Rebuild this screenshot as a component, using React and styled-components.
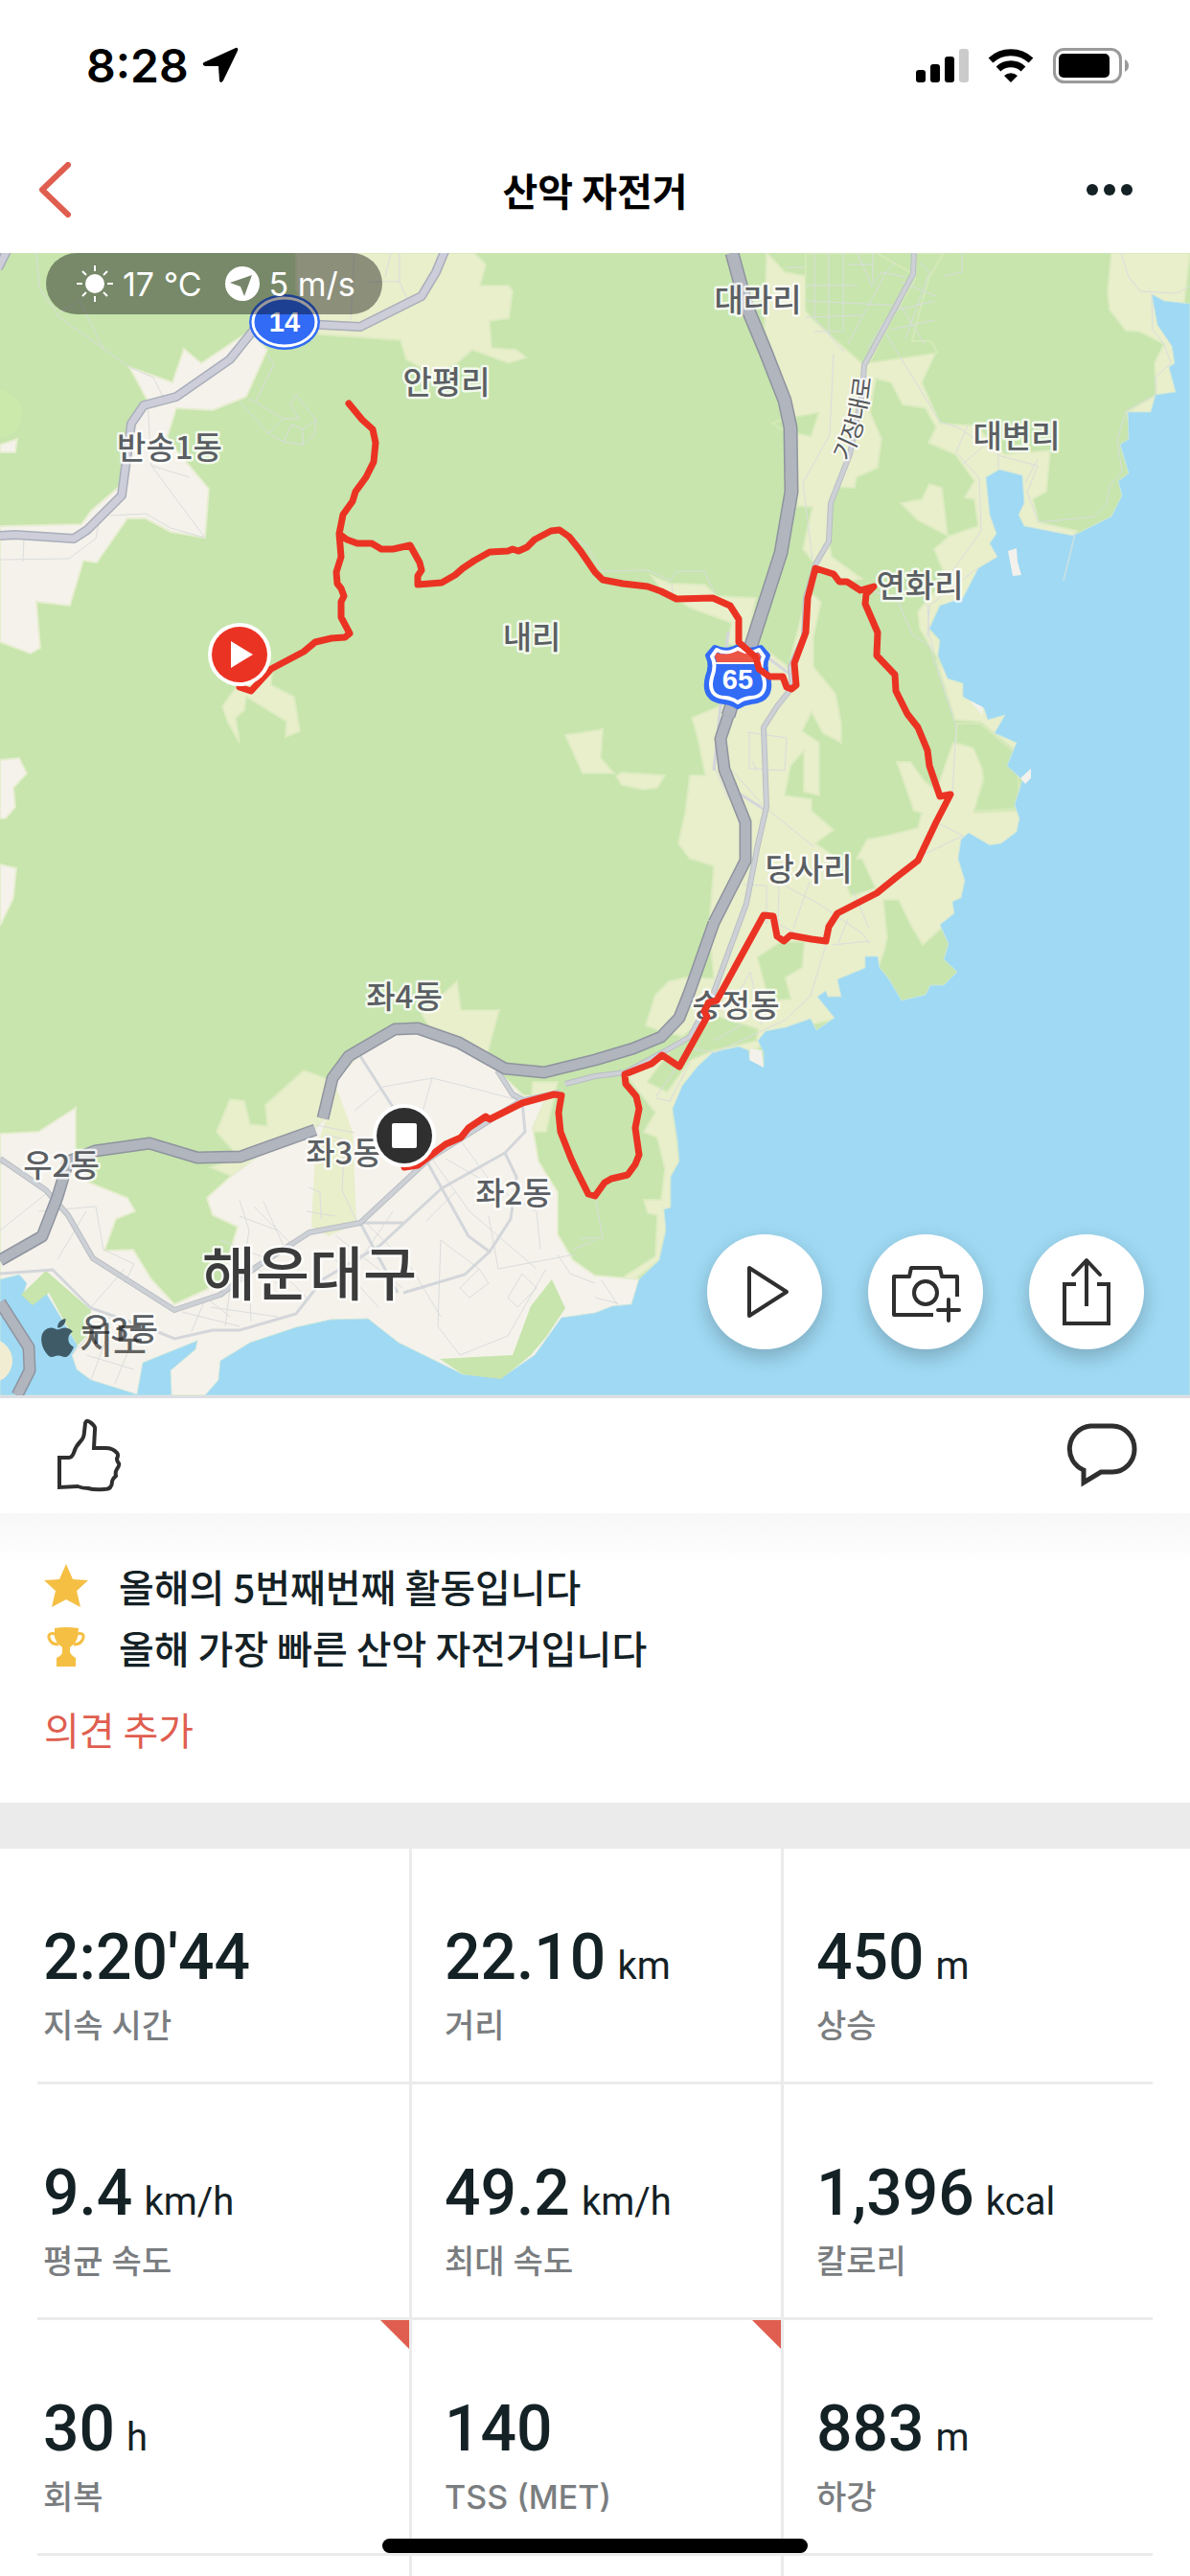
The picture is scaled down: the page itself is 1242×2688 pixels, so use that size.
import styled, { createGlobalStyle } from "styled-components";
import { FaApple } from "react-icons/fa";

const stats = [
  { value: "2:20'44", label: "지속 시간" },
  { value: "22.10", unit: "km", label: "거리" },
  { value: "450", unit: "m", label: "상승" },
  { value: "9.4", unit: "km/h", label: "평균 속도" },
  { value: "49.2", unit: "km/h", label: "최대 속도" },
  { value: "1,396", unit: "kcal", label: "칼로리" },
  { value: "30", unit: "h", label: "회복", flagged: true },
  { value: "140", label: "TSS (MET)", flagged: true },
  { value: "883", unit: "m", label: "하강" },
];

const places = [
  { name: "안평리", x: 466, y: 147 },
  { name: "반송1동", x: 177, y: 215 },
  { name: "내리", x: 555, y: 413 },
  { name: "대라리", x: 791, y: 61 },
  { name: "대변리", x: 1061, y: 203 },
  { name: "연화리", x: 960, y: 359 },
  { name: "당사리", x: 844, y: 655 },
  { name: "송정동", x: 768, y: 797 },
  { name: "좌4동", x: 422, y: 788 },
  { name: "좌3동", x: 359, y: 951 },
  { name: "좌2동", x: 536, y: 993 },
  { name: "우2동", x: 64, y: 964 },
  { name: "우3동", x: 125, y: 1135 },
];

const farmland = [
  "309,0 309,38 333,85 418,91 424,111 440,120 444,139 459,123 477,115 493,101 531,115 549,109 539,101 513,99 511,71 531,68 535,40 531,34 501,34 507,12 495,0",
  "248,451 232,473 238,490 250,511 246,485 255,477 257,463 299,489 298,505 313,499 307,463 283,451 284,436",
  "590,503 629,497 627,527 641,543 608,543",
  "643,546 649,542 694,545 686,558 671,560 649,555",
  "800,0 810,10 819,20 841,24 841,60 851,71 882,99 902,115 977,103 962,135 981,178 1017,180 1049,210 1096,206 1092,249 1078,257 1084,281 1124,290 1120,297 1069,287 1041,230 1045,317 1005,365 981,368 970,392 981,404 979,424 960,392 958,374 977,352 985,333 975,309 991,295 1021,285 1017,257 1007,255 1017,238 997,210 969,198 977,182 966,162 942,158 930,135 914,131 908,166 920,194 916,224 894,234 892,245 874,244 867,262 865,301 868,317 900,340 884,343 852,326 838,309 848,265 832,264 826,200 812,120 798,80",
  "722,485 756,471 791,408 823,432 843,352 857,364 849,400 849,432 872,460 878,491 878,511 859,501 847,479 837,499 855,511 855,566 839,562 839,519 825,535 819,566 847,570 847,582 870,602 851,616 871,630 888,671 914,663 900,632 894,632 905,612 926,608 958,600 962,584 954,582 936,531 950,531 964,550 977,562 988,530 995,511 1020,513 1029,539 1017,584 1061,582 1070,600 1040,625 1010,612 1010,680 994,694 963,722 950,700 938,675 922,675 926,715 922,731 915,750 882,776 871,800 846,805 799,818 791,830 744,840 712,872 702,893 709,948 700,964 700,996 688,1051 665,1069 640,1090 653,1067 684,1047 686,1004 676,1002 672,988 690,988 694,956 686,923 672,917 684,897 653,857 692,838 716,818 690,812 674,806 684,774 698,760 716,756 745,757 740,703 745,640 728,634 720,632 708,616 715,585 720,545 736,545 728,505",
  "680,337 700,345 736,346 748,358 789,360 779,408 758,408 764,386 720,370 690,350",
  "977,424 997,487 1023,489 1061,520 1052,533 1066,548 1075,500 1050,470 1010,450 990,440",
  "1160,0 1156,40 1158,59 1175,81 1190,82 1215,95 1205,115 1207,148 1177,166 1177,172 1205,170 1235,150 1235,60 1242,0",
  "940,261 962,257 970,241 983,245 989,295 958,279",
  "226,917 240,883 255,885 261,909 279,911 277,889 317,853 350,865 368,917 372,1012 343,1026 325,1016 329,937 301,933 297,984 265,992 253,968 220,954 250,944",
  "477,760 481,790 521,790 509,834 451,812 440,794",
  "556,865 582,865 570,917 515,917 519,901 554,889",
  "79,892 79,937 93,945 90,960 60,965 70,930 60,910",
];

// small green parks inside the coastal strip
const woods = [
  "791,735 815,719 839,719 837,745 819,756 825,778 803,780 797,758",
  "708,822 740,794 791,810 789,822 744,832 720,842 696,875 676,865",
  "999,491 1023,491 1061,523 1064,570 1058,580 1017,582 1027,550 1025,537 1016,516 998,511",
  "806,178 815,174 854,167 846,191 816,184",
  "841,0 915,0 953,22 902,117 882,99 851,71 841,60",
  "956,0 985,0 970,25 960,60 952,92 972,92 978,104 908,114 930,70 955,28",
];

const townBlocks = [
  "0,285 85,283 95,269 131,238 135,174 154,154 135,119 180,135 192,100 210,115 261,81 279,101 257,150 222,164 184,162 174,194 218,246 214,297 178,291 152,277 133,277 101,323 87,321 73,368 38,364 42,412 32,418 0,406",
  "0,200 18,194 16,208 0,208",
  "0,529 20,527 28,543 14,558 16,578 6,590 0,590",
  "0,638 17,642 14,673 0,702",
  "0,919 40,917 79,892 79,937 93,970 133,986 141,1000 121,1008 109,1041 139,1040 158,1071 182,1097 230,1075 248,1016 222,1004 216,986 238,966 297,921 329,913 341,901 348,865 372,840 412,814 436,812 483,830 519,853 546,879 570,881 556,913 562,948 582,980 582,1024 598,1051 621,1067 667,1071 659,1110 600,1192 0,1192",
];

const sea = [
  "1202,43 1208,75 1223,97 1226,115 1220,119 1227,145 1206,148 1201,166 1177,166 1178,194 1169,200 1178,230 1167,238 1171,253 1160,275 1140,285 1120,295 1069,285 1063,273 1069,261 1067,232 1043,226 1029,234 1033,273 1040,293 1033,303 1041,317 1021,329 1005,360 981,368 970,392 981,404 979,420 989,444 1005,449 1005,463 1027,475 1031,487 1049,482 1038,501 1061,511 1051,535 1067,550 1059,576 1064,590 1061,604 1045,616 1033,618 1011,605 1003,612 1000,632 1007,655 1003,673 994,677 996,689 981,701 990,721 985,737 999,750 985,764 971,764 966,774 941,780 928,758 918,746 916,734 903,734 903,746 874,758 878,776 864,776 862,770 853,776 871,798 852,811 846,799 820,808 799,812 791,822 797,834 797,849 783,842 781,832 771,828 744,834 728,849 712,869 702,893 707,925 709,948 700,964 700,996 693,998 695,1020 688,1051 667,1071 659,1097 639,1099 621,1106 586,1111 558,1150 523,1174 483,1170 416,1137 384,1112 345,1113 309,1121 261,1137 230,1156 228,1176 214,1192 1242,1192 1242,53 1215,50",
  "0,1071 20,1066 28,1075 24,1087 34,1097 48,1085 81,1140 75,1150 80,1165 95,1176 143,1191 149,1158 206,1135 204,1144 178,1166 179,1192 0,1192",
];

const parks = [
  "22,1087 48,1062 95,1103 93,1127 81,1140 70,1120 51,1085 34,1098",
  "576,1071 590,1101 570,1131 554,1150 523,1175 483,1170 459,1154 535,1150 554,1099",
];

const islets = [
  "1052,311 1061,308 1062,322 1066,336 1057,337",
  "1065,548 1076,538 1076,548 1070,554",
  "783,830 795,832 797,850 782,842",
  "1012,467 1026,474 1025,482",
];

const lanes = [
  "M38 0 41 36 62 67 135 119 160 130 170 150",
  "M62 62 83 50 108 100M154 154 158 222 214 297M158 222 198 234M115 274 152 272 178 287 214 297M105 272 100 298 72 319 0 320M25 298 24 322",
  "M279 106 286 116 267 155M250 155 280 188 296 197 316 200 328 190 330 174 309 148 303 158 312 173 296 173 260 152M280 188 296 173M296 197 304 179 316 184 330 174M316 184 316 200",
  "M370 0 366 70M385 30 417 30 417 0M402 25 408 0M417 30 425 48",
  "M850 0 850 68 881 103M865 0 865 85M880 0 880 80M895 0 910 35 920 20 945 25M841 34 895 34M841 50 940 55 965 95M841 67 900 65M850 82 882 82M885 95 925 20 935 10M905 100 950 30M911 0 911 30M885 12 912 12M820 15 840 15M870 105 866 190 838 240 848 320",
  "M919 75 981 176 1000 182 1045 212 1083 222 1072 250 1084 281 1142 275 1155 262 1158 243 1171 228M997 210 1010 180M1000 210 1022 235 1024 290 985 345M1005 220 1040 190M1042 225 1042 210M1070 240 1083 215M935 60 975 50M930 80 975 70M945 90 970 20 960 10M940 30 977 45",
  "M1170 0 1178 25 1190 40 1228 42 1242 35M1202 43 1203 80 1215 95 1222 115 1206 130 1206 148 1175 165 1166 195 1171 228M1004 0 1004 20 985 24",
  "M590 293 612 305 628 332 676 331 700 342 706 332 735 332 746 355M701 345 703 360M880 340 937 363 952 398 970 410 998 494 994 565M968 366 970 400 975 415M1020 329 970 368 968 400",
  "M780 500 821 506 819 540 782 538 782 500M785 530 790 540M763 539 798 578 850 620M745 535 760 570M977 594 1005 608 955 632M775 659 800 660 800 700M813 660 812 700 840 715M845 656 828 705M819 660 856 680 900 710 907 720 907 718 869 722M885 695 875 720M890 665 907 705M862 722 846 775 820 800 745 835M767 780 783 750 795 805M745 822 775 805M685 880 720 830 744 834M685 882 699 885 720 845",
  "M370 895 400 870 451 861 480 868 545 885M451 861 440 900 415 950M330 910 370 918M320 950 340 920 360 925 357 978 373 1012M320 1000 350 1005M322 975 334 980 335 1008M250 988 260 1020 255 1050 290 1075M265 995 310 1040M275 990 300 1045M250 1005 290 1020M230 1030 280 1050 320 1090M380 1010 430 1060 460 1110M410 1000 370 1060M350 1025 420 1080M345 1045 395 1100M440 930 490 1000 560 1060M480 925 520 980M465 945 560 1000 564 1040M475 980 445 1010M510 1005 520 1060 600 1045M570 1060 530 1130 480 1150 457 1120 460 1030 500 1060M530 1090 545 1065 560 1080 540 1100zM480 1080 500 1060 510 1075 490 1090zM598 1040 621 1030M582 1045 595 1065 621 1075M200 1125 215 1090 240 1110M220 1100 290 1110M240 1080 235 1120M260 1070 262 1115M190 1105 250 1120M40 1000 100 995 108 1040 140 1055 130 1075M0 1020 50 980M60 1050 90 1000M95 1100 130 1060M75 1150 110 1110 150 1125M95 1176 110 1135M120 1180 140 1130M90 1150 140 1165M0 950 20 955",
  "M621 984 629 1028 605 1028M628 1072 645 1098M621 1090 645 1096",
];

const sideRoads = [
  "M444 945 461 976 489 1026 511 1042 533 1008 539 964 527 939 548 917 545 885",
  "M527 939 461 976 396 1036 337 1071 309 1107 250 1124 222 1124 182 1133 158 1123 95 1101 55 1061 0 1065",
  "M376 838 410 891",
  "M376 1012 421 1012",
  "M376 1012 415 1085",
  "M421 1085 485 1066 511 1042",
  "M785 410 825 440M760 395 745 540M765 560 800 582",
];

const mainRoads = [
  "M954 0 953 22 902 117 900 146 887 210 867 261 865 301 851 325 841 360 839 400 825 432 827 453 811 473 797 495 800 578 791 617 779 679 744 774 720 818 692 834 653 855 621 859 590 867",
  "M0 945 48 978 71 1004 97 1049 182 1103 230 1087 269 1057 323 1022 376 1012 448 945 543 885 584 876",
  "M519 853 535 878 548 885",
];

const highways = [
  "M745 699 720 770 709 798 690 818 661 830 621 842 568 855 527 851 479 824 436 809 412 810 364 838 347 861 337 903",
  "M329 915 251 943 206 944 156 929 99 937 71 948 60 985 44 1026 0 1051",
  "M0 1095 30 1142 31 1166 18 1192",
  "M760 483 752 507 756 539 778 594 778 634 745 699",
];

const expressway =
  "M764 0 779 55 799 103 819 154 825 182 826 249 815 313 787 400 760 483";

const route =
  "M250 453 262 457 283 434 317 416 329 406 346 402 360 401 365 397 356 380 356 364 359 358 356 350 352 345 351 333 356 317 354 293 358 273 368 259 371 249 382 234 390 218 392 198 389 184 378 174 364 157 378 174 389 184 392 198 390 218 382 234 371 249 368 259 358 273 354 293 362 299 373 303 388 303 398 309 410 309 428 305 438 323 440 331 436 337 436 346 461 344 475 336 483 329 495 321 511 312 530 311 535 309 541 311 550 307 558 299 575 290 584 289 594 296 606 311 621 333 629 341 650 345 676 348 690 353 706 361 744 360 762 368 771 382 771 406 789 422 792 434 803 442 817 442 821 453 826 455 831 451 829 428 841 396 843 360 851 329 870 335 876 343 884 343 898 352 912 348 904 356 903 366 916 396 915 420 934 440 935 457 947 481 958 495 968 519 970 535 981 567 992 565 977 594 958 634 936 651 915 668 874 689 865 703 862 718 847 716 825 712 818 718 811 713 807 692 797 691 748 780 740 782 735 791 738 797 709 849 691 837 680 846 652 857 653 867 664 880 667 893 663 913 667 941 663 951 655 962 638 966 631 970 621 984 614 982 602 958 596 945 585 917 583 897 586 879 578 878 545 887 511 904 507 901 489 913 481 923 465 930 436 952 422 954";

function Shapes({ items, ...rest }) {
  return (
    <g {...rest}>
      {items.map((points) => (
        <polygon key={points} points={points} />
      ))}
    </g>
  );
}

// a road is a darker casing with a lighter line on top
function Roads({ items, width, color, edge, casing = 3 }) {
  return (
    <g fill="none" strokeLinejoin="round">
      {items.map((d) => (
        <path key={d} d={d} stroke={edge} strokeWidth={width + casing} />
      ))}
      {items.map((d) => (
        <path key={d} d={d} stroke={color} strokeWidth={width} />
      ))}
    </g>
  );
}

function RouteMap() {
  return (
    <MapSvg viewBox="0 0 1242 1192" role="img" aria-label="경로 지도">
      <defs>
        <path id="gijang" d="M885 218 Q 906 180 910 124" />
      </defs>
      <rect width="1242" height="1192" fill="#c7e5ad" />
      <circle cx="-2" cy="168" r="25" fill="#cbe9ab" />
      <Shapes items={farmland} fill="#e9eecb" stroke="#dcebc0" strokeWidth="2" />
      <Shapes items={woods} fill="#c7e5ad" stroke="#d5e9b9" strokeWidth="2" />
      <Shapes items={townBlocks} fill="#f5f2eb" stroke="#e6edcf" strokeWidth="2" />
      <polygon
        points="341,901 350,868 368,917 372,1012 343,1026 325,1016 329,937"
        fill="#e9eecb"
      />
      <Shapes items={sea} fill="#9fd9f3" stroke="#c9e6df" strokeWidth="1" />
      <Shapes items={parks} fill="#c7e5ad" />
      <Shapes items={islets} fill="#f3f1ec" />
      <circle cx="-10" cy="1156" r="23" fill="#f1edd2" />
      <path d="M1122 293 1110 342" stroke="#c4dfe6" strokeWidth="2" />

      <g fill="none" stroke="#dadddd" strokeWidth="1">
        {lanes.map((d) => (
          <path key={d} d={d} />
        ))}
      </g>
      <g fill="none" stroke="#d3d6da" strokeWidth="3">
        {sideRoads.map((d) => (
          <path key={d} d={d} />
        ))}
      </g>
      <Roads items={mainRoads} width={4} casing={2} color="#cdd1d6" edge="#b8bdc4" />
      <Roads
        items={[
          "M0 295 16 294 77 298 91 289 127 253 137 178 150 159 184 150 240 111 269 75 297 73 376 77 440 45 455 20 465 -4",
          "M-2 16 8 -4",
        ]}
        width={7}
        color="#cdced9"
        edge="#a9aeba"
      />
      <Roads items={highways} width={10} color="#b0b5be" edge="#8f949f" />
      <Roads items={[expressway]} width={12} color="#b0b5be" edge="#8f949f" />

      <PlaceName $size={61} x="323" y="1088">
        해운대구
      </PlaceName>
      {places.map((place) => (
        <PlaceName key={place.name} x={place.x} y={place.y}>
          {place.name}
        </PlaceName>
      ))}
      <RoadName>
        <textPath href="#gijang">기장대로</textPath>
      </RoadName>

      <ellipse cx="297" cy="72" rx="37" ry="29" fill="#316bf6" />
      <ellipse cx="297" cy="72" rx="33" ry="25" fill="none" stroke="#fff" strokeWidth="3" />
      <ShieldText x="297" y="82">
        14
      </ShieldText>

      <g strokeLinejoin="round">
        <path
          d="M746 412 Q758 418 770 411 Q782 418 794 412 L801 420 Q796 430 801 442 Q807 466 784 468 Q776 469 770 473 Q764 469 756 468 Q733 466 739 442 Q744 430 739 420Z"
          fill="#316bf6"
          stroke="#316bf6"
          strokeWidth="6"
        />
        <path
          d="M748 414 Q759 420 770 413 Q781 420 792 414 L797 421 Q792 430 797 443 Q802 463 783 464 Q775 465 770 469 Q765 465 757 464 Q738 463 743 443 Q748 430 743 421Z"
          fill="#316bf6"
          stroke="#fff"
          strokeWidth="4"
        />
        <path
          d="M748 417 Q759 421 770 415 Q781 421 792 417 L794 421 792 427 H748 L746 421Z"
          fill="#ed5647"
        />
        <path d="M746 428H794" stroke="#fff" strokeWidth="2" />
      </g>
      <ShieldText x="770" y="455">
        65
      </ShieldText>

      <path
        d={route}
        fill="none"
        stroke="#eb3323"
        strokeWidth="7"
        strokeLinejoin="round"
        strokeLinecap="round"
      />

      <circle cx="250" cy="419" r="33" fill="#fff" />
      <circle cx="250" cy="419" r="29" fill="#eb3323" />
      <path d="M241 405V433L264 419Z" fill="#fff" />
      <circle cx="422" cy="921" r="33" fill="#fff" />
      <circle cx="422" cy="921" r="29" fill="#2f2f2f" />
      <rect x="409" y="908" width="26" height="26" rx="2" fill="#fff" />

      <FaApple x="37" y="1109" size={46} color="#3f5b68" />
      <CreditText x="83" y="1148">
        지도
      </CreditText>
    </MapSvg>
  );
}

export default function App() {
  return (
    <>
      <GlobalStyle />
      <Screen>
        <StatusBar>
          <Clock>
            8:28
            <svg width="38" height="38" viewBox="0 0 38 38">
              <path
                d="M35 1 2 16Q-1 18 3 20L17 20 18 35Q19 39 22 35L37 4Q38 0 35 1Z"
                fill="#000"
              />
            </svg>
          </Clock>
          <StatusIcons>
            <svg width="55" height="36" viewBox="0 0 55 36">
              <rect y="23" width="10" height="13" rx="3" />
              <rect x="15" y="17" width="10" height="19" rx="3" />
              <rect x="30" y="9" width="10" height="27" rx="3" />
              <rect x="45" y="1" width="10" height="35" rx="3" fill="#cbcbcb" />
            </svg>
            <svg width="48" height="36" viewBox="0 0 48 36">
              <g fill="none" stroke="#000" strokeWidth="7">
                <path d="M3 13A31 31 0 0 1 45 13" />
                <path d="M11 22A19 19 0 0 1 37 22" />
              </g>
              <path d="M24 36 17 29A10 10 0 0 1 31 29Z" />
            </svg>
            <svg width="79" height="37" viewBox="0 0 79 37">
              <rect
                x="1.5"
                y="1.5"
                width="69"
                height="34"
                rx="10"
                fill="none"
                stroke="#9a9a9a"
                strokeWidth="3"
              />
              <rect x="6" y="6" width="53" height="25" rx="5" />
              <path d="M75 12Q79 14 79 18.5T75 25Z" fill="#9a9a9a" />
            </svg>
          </StatusIcons>
        </StatusBar>

        <NavBar>
          <IconButton aria-label="뒤로">
            <svg width="34" height="58" viewBox="0 0 34 58">
              <path
                d="M31 3 4 29 31 55"
                fill="none"
                stroke="#df5e4f"
                strokeWidth="6"
                strokeLinecap="round"
                strokeLinejoin="round"
              />
            </svg>
          </IconButton>
          <Title>산악 자전거</Title>
          <MoreButton aria-label="더 보기">
            <svg width="48" height="12" viewBox="0 0 48 12" fill="#142125">
              <circle cx="6" cy="6" r="6" />
              <circle cx="24" cy="6" r="6" />
              <circle cx="42" cy="6" r="6" />
            </svg>
          </MoreButton>
        </NavBar>

        <MapArea>
          <RouteMap />
          <Weather>
            <svg width="38" height="38" viewBox="0 0 38 38">
              <circle cx="19" cy="19" r="10" fill="#fff" />
              <path
                d="M19 0V6M19 32V38M0 19H6M32 19H38M6 6 10 10M28 28 32 32M32 6 28 10M10 28 6 32"
                stroke="#fff"
                strokeWidth="2"
              />
            </svg>
            <WeatherText>17 °C</WeatherText>
            <svg width="36" height="36" viewBox="0 0 36 36">
              <circle cx="18" cy="18" r="18" fill="#fff" />
              <path d="M28 9 5 17 16 21 20 31Z" fill="#77866a" />
            </svg>
            <WeatherText>5 m/s</WeatherText>
          </Weather>
          <MapActions>
            <RoundButton aria-label="재생">
              <ActionIcon viewBox="-60 -60 120 120">
                <path d="M-16 -25V25L23 0Z" />
              </ActionIcon>
            </RoundButton>
            <RoundButton aria-label="사진 추가">
              <ActionIcon viewBox="-60 -60 120 120">
                <path
                  d="M8 24H-33V-16H-17L-15 -25H15L17 -16H33V5"
                  strokeLinecap="butt"
                />
                <circle cx="0" cy="1" r="12" />
                <path d="M24 8V30M13 19H35" />
              </ActionIcon>
            </RoundButton>
            <RoundButton aria-label="공유">
              <ActionIcon viewBox="-60 -60 120 120">
                <path
                  d="M-11 -8H-23V33H23V-8H11M0 15V-32"
                  strokeLinecap="butt"
                  strokeLinejoin="miter"
                />
                <path d="M-14 -18 0 -33 14 -18" />
              </ActionIcon>
            </RoundButton>
          </MapActions>
        </MapArea>

        <SocialBar>
          <IconButton aria-label="좋아요">
            <svg width="68" height="78" viewBox="0 0 68 78">
              <path
                d="M2 41H12Q15 41 17 36Q19 29 24 24Q28 20 28 14L29 5Q30 1 34 4Q40 8 39 12L38 31H50Q58 31 62 36Q64 38 62 42Q62 45 64 47Q65 49 62 53Q60 56 61 60Q57 64 57 66Q57 74 49 74Q38 75 32 73Q26 73 21 71L2 72Z"
                fill="none"
                stroke="#2f2f2f"
                strokeWidth="4"
              />
            </svg>
          </IconButton>
          <IconButton aria-label="댓글">
            <svg width="80" height="72" viewBox="0 0 80 72">
              <path
                d="M29 5H52A23 24 0 0 1 52 53H40L22 64V51A24 24 0 0 1 29 5Z"
                fill="none"
                stroke="#2f2f2f"
                strokeWidth="5"
              />
            </svg>
          </IconButton>
        </SocialBar>

        <Highlights>
          <Highlight>
            <svg width="46" height="46" viewBox="0 0 46 46">
              <path
                d="M23 0 30 16 46 17 34 28 38 45 23 37 8 45 12 28 0 17 16 16Z"
                fill="#f5bf43"
              />
            </svg>
            올해의 5번째번째 활동입니다
          </Highlight>
          <Highlight>
            <svg width="46" height="46" viewBox="0 0 46 46">
              <path
                d="M11 3Q23 1 36 3L35 12Q34 18 27 23V28Q28 31 33 34V43H13V34Q19 31 19 28V23Q12 18 11 12Z"
                fill="#f5bf43"
              />
              <path
                d="M12 9Q4 7 5 13Q7 20 15 20M34 9Q42 7 41 13Q39 20 31 20"
                fill="none"
                stroke="#f5bf43"
                strokeWidth="3"
              />
            </svg>
            올해 가장 빠른 산악 자전거입니다
          </Highlight>
          <AddComment>의견 추가</AddComment>
        </Highlights>

        <StatsGrid>
          {stats.map((stat) => (
            <StatCell key={stat.label} $flagged={stat.flagged}>
              <StatValue>
                {stat.value}
                {stat.unit && <Unit>{stat.unit}</Unit>}
              </StatValue>
              <StatLabel>{stat.label}</StatLabel>
            </StatCell>
          ))}
          <StatCell />
          <StatCell />
          <StatCell />
        </StatsGrid>
        <HomeIndicator />
      </Screen>
    </>
  );
}

const GlobalStyle = createGlobalStyle`
  * {
    box-sizing: border-box;
  }

  body {
    margin: 0;
    background: #fff;
    color: #142125;
    font-family: Roboto, "Noto Sans CJK KR", sans-serif;
  }

  svg {
    display: block;
    flex-shrink: 0;
  }
`;

const Screen = styled.main`
  display: flex;
  flex-direction: column;
  height: 100vh;
  overflow: hidden;
`;

const StatusBar = styled.header`
  display: flex;
  flex-shrink: 0;
  justify-content: space-between;
  align-items: center;
  height: 136px;
  padding: 0 64px 0 90px;
`;

const Clock = styled.div`
  display: flex;
  align-items: center;
  gap: 14px;
  color: #000;
  font-family: Inter, sans-serif;
  font-size: 48px;
  font-weight: 600;
`;

const StatusIcons = styled.div`
  display: flex;
  align-items: center;
  gap: 20px;
`;

const NavBar = styled.nav`
  display: grid;
  grid-template-columns: 1fr auto 1fr;
  flex-shrink: 0;
  align-items: center;
  height: 128px;
  padding: 0 40px 4px;
`;

const IconButton = styled.button`
  justify-self: start;
  padding: 0;
  border: none;
  background: none;
  cursor: pointer;
`;

const MoreButton = styled(IconButton)`
  justify-self: end;
  padding: 20px;
`;

const Title = styled.h1`
  margin: 0;
  color: #000;
  font-family: "Noto Sans CJK KR", sans-serif;
  font-size: 40px;
  font-weight: 700;
`;

const MapArea = styled.section`
  position: relative;
  flex-shrink: 0;
  overflow: hidden;
`;

const MapSvg = styled.svg`
  width: 100%;
  height: auto;
`;

const PlaceName = styled.text`
  fill: ${(props) => (props.$size ? "#3c3c3c" : "#5b5f63")};
  stroke: #fff;
  stroke-opacity: 0.8;
  stroke-width: 5px;
  stroke-linejoin: round;
  paint-order: stroke;
  text-anchor: middle;
  font-family: "Noto Sans CJK KR", sans-serif;
  font-size: ${(props) => props.$size || 33}px;
  font-weight: 500;
`;

const RoadName = styled.text`
  fill: #55585b;
  stroke: #fff;
  stroke-opacity: 0.8;
  stroke-width: 4px;
  paint-order: stroke;
  font-family: "Noto Sans CJK KR", sans-serif;
  font-size: 25px;
`;

const ShieldText = styled.text`
  fill: #fff;
  text-anchor: middle;
  font-family: "Liberation Sans", sans-serif;
  font-size: 29px;
  font-weight: 700;
`;

const CreditText = styled.text`
  fill: #222;
  fill-opacity: 0.7;
  font-family: "Noto Sans CJK KR", sans-serif;
  font-size: 38px;
  font-weight: 500;
`;

const Weather = styled.div`
  position: absolute;
  top: 0;
  left: 48px;
  display: flex;
  align-items: center;
  gap: 10px;
  height: 64px;
  padding: 0 28px 0 32px;
  border-radius: 32px;
  background: rgba(0, 0, 0, 0.4);
`;

const WeatherText = styled.span`
  margin-right: 14px;
  color: #fff;
  font-family: Inter, sans-serif;
  font-size: 34px;

  &:last-child {
    margin-right: 0;
  }
`;

const MapActions = styled.div`
  position: absolute;
  right: 48px;
  bottom: 48px;
  display: flex;
  gap: 48px;
`;

const RoundButton = styled.button`
  width: 120px;
  height: 120px;
  padding: 0;
  border: none;
  border-radius: 50%;
  background: #fff;
  box-shadow: 0 8px 20px rgba(0, 0, 0, 0.22);
  cursor: pointer;
`;

const ActionIcon = styled.svg`
  width: 100%;
  fill: none;
  stroke: #2f2f2f;
  stroke-width: 4px;
  stroke-linecap: round;
  stroke-linejoin: round;
`;

const SocialBar = styled.div`
  display: flex;
  flex-shrink: 0;
  justify-content: space-between;
  align-items: center;
  height: 123px;
  padding: 0 53px 0 60px;
  border-top: 3px solid #dddee4;
`;

const Highlights = styled.section`
  flex-shrink: 0;
  padding: 44px 46px 45px;
  border-bottom: 48px solid #ebebeb;
  background: linear-gradient(#f7f7f7, #fff 54px);
`;

const Highlight = styled.div`
  display: flex;
  align-items: center;
  gap: 32px;
  font-family: "Noto Sans CJK KR", sans-serif;
  font-size: 40px;
  font-weight: 500;
  line-height: 64px;
`;

const AddComment = styled.button`
  display: block;
  margin-top: 21px;
  padding: 0;
  border: none;
  background: none;
  color: #df5e4f;
  font-family: "Noto Sans CJK KR", sans-serif;
  font-size: 40px;
  line-height: 64px;
  cursor: pointer;
`;

const StatsGrid = styled.section`
  display: grid;
  grid-template-columns: repeat(3, 1fr);
  grid-auto-rows: 246px;
  flex-shrink: 0;
  padding: 0 39px;
`;

const StatCell = styled.div`
  position: relative;
  padding: 78px 0 0 34px;
  border-left: 3px solid #ebebeb;
  border-bottom: 3px solid #ebebeb;

  &:nth-child(3n + 1) {
    padding-left: 6px;
    border-left: none;
  }

  &::after {
    content: "";
    display: ${(props) => (props.$flagged ? "block" : "none")};
    position: absolute;
    top: 0;
    right: 0;
    width: 30px;
    height: 30px;
    background: #df5e4f;
    clip-path: polygon(0 0, 100% 0, 100% 100%);
  }
`;

const StatValue = styled.div`
  height: 72px;
  font-size: 66px;
  font-weight: 500;
  line-height: 72px;
`;

const Unit = styled.span`
  margin-left: 12px;
  font-size: 40px;
  font-weight: 400;
  line-height: 40px;
`;

const StatLabel = styled.div`
  margin-top: 11px;
  color: #7a7d80;
  font-family: Inter, "Noto Sans CJK KR", sans-serif;
  font-size: 34px;
  font-weight: 500;
  line-height: 48px;
`;

const HomeIndicator = styled.div`
  position: fixed;
  bottom: 24px;
  left: 50%;
  width: 444px;
  height: 15px;
  border-radius: 8px;
  background: #000;
  transform: translateX(-50%);
`;
